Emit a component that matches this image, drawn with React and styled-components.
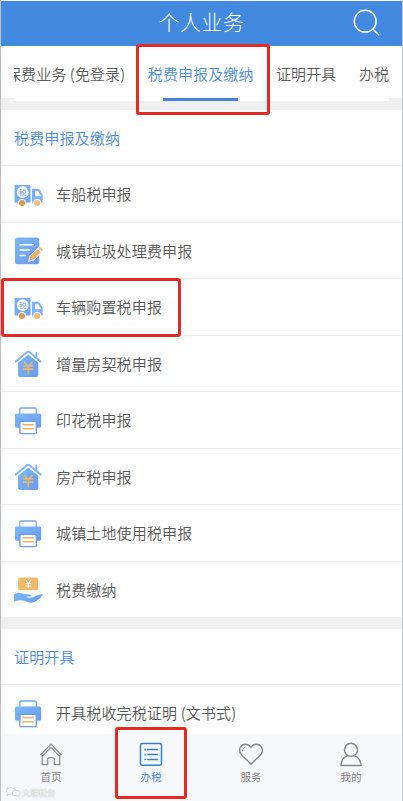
import styled, { createGlobalStyle, css } from "styled-components";

const font = `"Noto Sans CJK SC", "Noto Sans", sans-serif`;

const GlobalStyle = createGlobalStyle`
  * {
    box-sizing: border-box;
  }
  body {
    margin: 0;
    background: #fff;
    font-family: ${font};
    font-weight: 350;
    overflow: hidden;
  }
`;

// icons
const SearchIcon = () => (
  <svg width="30" height="30" viewBox="0 0 30 30" fill="none" stroke="#fff" strokeWidth="1.5">
    <circle cx="13.2" cy="13.2" r="10.9" />
    <path d="M20.8 21 L27.2 27.2" />
  </svg>
);

const Blue = () => (
  <defs>
    <linearGradient id="blue" x1="0" y1="0" x2="1" y2="1">
      <stop offset="0" stopColor="#7cb8f4" />
      <stop offset="1" stopColor="#6a9bec" />
    </linearGradient>
    <linearGradient id="blueLine" gradientUnits="userSpaceOnUse" x1="0" y1="0" x2="28" y2="28">
      <stop offset="0" stopColor="#7cb8f4" />
      <stop offset="1" stopColor="#6a9bec" />
    </linearGradient>
  </defs>
);

const TruckIcon = () => (
  <svg width="30" height="28" viewBox="0 0 30 28">
    <Blue />
    <rect x="0.5" y="4" width="16" height="17.5" rx="0.8" fill="url(#blueLine)" />
    <path d="M18 7.8 H23.8 Q25 7.8 25.7 8.8 L28.7 14 V20.5 Q28.7 21.5 27.7 21.5 H18 Z" fill="#7db3f2" />
    <path d="M21.2 10 H24 L27 15.2 H21.2 Z" fill="#fff" />
    <circle cx="8.7" cy="11.2" r="5.9" fill="#fff" />
    <text x="8.7" y="13.9" textAnchor="middle" fontSize="7.4" fontWeight="500" fontFamily={font} fill="#79a9ed">
      税
    </text>
    <circle cx="8" cy="22" r="4" fill="#fff" />
    <circle cx="23.2" cy="22" r="4" fill="#fff" />
    <circle cx="8" cy="22" r="3" fill="#d99954" />
    <circle cx="23.2" cy="22" r="3" fill="#efbd78" />
  </svg>
);

const FormIcon = () => (
  <svg width="30" height="28" viewBox="0 0 30 28">
    <Blue />
    <rect x="1" y="0.5" width="24.3" height="26.8" rx="2.5" fill="url(#blue)" />
    <path d="M6 7.7 H19.5 M6 13 H15.5 M6 18.6 H11.5" stroke="#fff" strokeWidth="1.5" strokeLinecap="round" />
    <path d="M14.5 24.5 L16 19 L25 10 L29 14 L20 23 Z" fill="#fff" stroke="#fff" strokeWidth="0.6" />
    <path d="M15 23.8 L16.4 19.3 L23.7 12 L26.9 15.2 L19.6 22.5 Z" fill="#edae62" />
    <path d="M24.5 11.4 L25.5 10.5 Q26.1 10 26.7 10.5 L28.3 12.1 Q28.8 12.7 28.3 13.3 L27.4 14.3 Z" fill="#f4c083" />
  </svg>
);

const HouseIcon = () => (
  <svg width="30" height="28" viewBox="0 0 30 28">
    <Blue />
    <path d="M14.2 4.4 L24.3 12.8 V24.8 Q24.3 27 22.1 27 H6.2 Q4 27 4 24.8 V12.8 Z" fill="url(#blue)" />
    <path
      d="M1.6 11.8 L13.2 2.1 Q14.2 1.3 15.2 2.1 L26.8 11.8"
      fill="none"
      stroke="#fff"
      strokeWidth="4"
    />
    <path
      d="M1.8 11.6 L13.2 2.1 Q14.2 1.3 15.2 2.1 L26.6 11.6 M22.4 7.6 V2.8"
      fill="none"
      stroke="#7db3f2"
      strokeWidth="1.9"
      strokeLinecap="round"
    />
    <path
      d="M10.4 12.5 L12.7 15 M18 12.5 L15.7 15 M9.6 15.8 H18.8 M9.6 19.2 H18.8 M14.2 15.8 V23.5"
      fill="none"
      stroke="#e6b376"
      strokeWidth="1.7"
      strokeLinecap="round"
    />
  </svg>
);

const PrinterIcon = () => (
  <svg width="30" height="28" viewBox="0 0 30 28">
    <Blue />
    <path d="M5.9 7 V2.2 Q5.9 1 7.1 1 H21 Q22.2 1 22.2 2.2 V7" fill="none" stroke="#70a9f0" strokeWidth="1.3" />
    <rect x="1" y="6.5" width="26.2" height="14.2" rx="1.8" fill="url(#blue)" />
    <rect x="5.9" y="14.2" width="16.4" height="12.4" rx="1.2" fill="#fff" stroke="#6a9fee" strokeWidth="1.4" />
    <path d="M8.5 17.7 H19.8 M8.5 21.8 H19.8" stroke="#eeb062" strokeWidth="1.5" />
  </svg>
);

const PayIcon = () => (
  <svg width="30" height="28" viewBox="0 0 30 28">
    <Blue />
    <rect x="4.2" y="1.6" width="19.8" height="12.6" rx="1.8" fill="#f0b96b" />
    <path
      d="M11.9 4.2 L14.3 7.8 L16.7 4.2 M11.7 7.8 H16.9 M11.7 10 H16.9 M14.3 7.8 V12"
      fill="none"
      stroke="#fff"
      strokeWidth="1.1"
    />
    <path
      d="M0 18.2 Q3.2 15.8 7.6 17.2 Q10.4 18.4 13.5 18.2 Q17.8 18 17.4 19.7 Q17 20.8 13 20.8 Q16.5 22 20.2 20.4 L24.7 18.8 Q29 17.5 28.8 18.8 Q27 22.2 22.3 25 Q18.5 27.4 14.5 26.3 Q9.3 23.8 5.5 24.2 L0 25.3 Z"
      fill="url(#blue)"
    />
    <path d="M12.5 21 Q17 22 20.2 20.4" fill="none" stroke="#fff" strokeWidth="0.8" />
  </svg>
);

const HomeIcon = () => (
  <svg width="26" height="26" viewBox="0 0 26 26" fill="none" stroke="#878787" strokeWidth="1.2">
    <path d="M2.4 14.2 L13 3 L23.6 14.2" />
    <path d="M4.2 15.7 L13 6.4 L21.8 15.7" />
    <path d="M4.2 14 V23.7 H9.7 V17.8 Q9.7 16.6 13 16.6 Q16.3 16.6 16.3 17.8 V23.7 H21.8 V14" />
  </svg>
);

const ListIcon = () => (
  <svg width="26" height="26" viewBox="0 0 26 26" fill="none" stroke="#397fd0" strokeWidth="1.5">
    <rect x="2.5" y="2.4" width="21" height="21.8" rx="1.6" />
    <path d="M9.2 8.5 H19.8 M9.2 13.5 H19.8 M9.2 18.5 H19.8 M6.3 8.5 H7.8 M6.3 13.5 H7.8 M6.3 18.5 H7.8" strokeWidth="1.3" />
  </svg>
);

const HeartIcon = () => (
  <svg width="26" height="26" viewBox="0 0 26 26" fill="none" stroke="#878787" strokeWidth="1.4">
    <path d="M13 23.1 L3.4 13.8 Q0.3 10 2.3 6.3 Q4.2 3.2 7.5 3.2 Q10.8 3.2 13 6 Q15.2 3.2 18.5 3.2 Q21.8 3.2 23.7 6.3 Q25.7 10 22.6 13.8 Z" />
    <path d="M4.6 10.2 Q4.3 6.7 7.6 6" strokeWidth="1" />
  </svg>
);

const UserIcon = () => (
  <svg width="26" height="26" viewBox="0 0 26 26" fill="none" stroke="#878787" strokeWidth="1.4">
    <circle cx="13" cy="8.8" r="6.5" />
    <path d="M9.6 14.8 Q3.4 16.8 3 24.5 H23 Q22.6 16.8 16.4 14.8" />
  </svg>
);

const taxItems = [
  { name: "车船税申报", icon: TruckIcon },
  { name: "城镇垃圾处理费申报", icon: FormIcon },
  { name: "车辆购置税申报", icon: TruckIcon, marked: true },
  { name: "增量房契税申报", icon: HouseIcon },
  { name: "印花税申报", icon: PrinterIcon },
  { name: "房产税申报", icon: HouseIcon },
  { name: "城镇土地使用税申报", icon: PrinterIcon },
  { name: "税费缴纳", icon: PayIcon },
];

const navItems = [
  { name: "首页", icon: HomeIcon },
  { name: "办税", icon: ListIcon, active: true },
  { name: "服务", icon: HeartIcon },
  { name: "我的", icon: UserIcon },
];

const App = () => {
  return (
    <Page>
      <GlobalStyle />
      <Header>
        <h1>个人业务</h1>
        <SearchButton aria-label="search">
          <SearchIcon />
        </SearchButton>
      </Header>
      <Tabs>
        <TabList>
          <Tab>保费业务 (免登录)</Tab>
          <Tab $active>税费申报及缴纳</Tab>
          <Tab>证明开具</Tab>
          <Tab>办税</Tab>
        </TabList>
        <Mark $top={-2} $left={136} $width={134} $height={71} />
      </Tabs>
      <Content>
        <Section>
          <SectionTitle>税费申报及缴纳</SectionTitle>
          {taxItems.map(({ name, icon: Icon, marked }) => (
            <Row key={name}>
              <Icon />
              <span>{name}</span>
              {marked && <Mark $top={-1} $left={1} $width={180} $height={59} />}
            </Row>
          ))}
        </Section>
        <Section>
          <SectionTitle>证明开具</SectionTitle>
          <Row>
            <PrinterIcon />
            <span>开具税收完税证明 (文书式)</span>
          </Row>
        </Section>
      </Content>
      <Nav>
        {navItems.map(({ name, icon: Icon, active }) => (
          <NavItem key={name} $active={active}>
            <Icon />
            <span>{name}</span>
            {active && <Mark $top={-7} $left={15} $width={72} $height={72} />}
          </NavItem>
        ))}
        <Watermark>
          <svg width="15" height="11" viewBox="0 0 15 11" fill="#fff" stroke="#c4c4c4" strokeWidth="0.7">
            <path d="M1 1.5 Q5 -0.2 9 1.5 Q11 5 7 7.2 L3 7 L1.5 9 L1.6 6.3 Q-0.2 4 1 1.5 Z" />
            <path d="M7 4 Q10 2.2 13.3 4 Q15.2 6.6 13 8 L12.8 9.6 L11.2 8.7 Q7.5 9.3 6.6 7 Q6 5.2 7 4 Z" />
          </svg>
          <span>大理税务</span>
        </Watermark>
      </Nav>
    </Page>
  );
};

const Page = styled.div`
  position: relative;
  display: flex;
  flex-direction: column;
  width: 403px;
  height: 801px;
  padding-top: 1px;
  border-left: 1px solid #bcbec1;
  border-right: 1px solid #c3cbd4;
  overflow: hidden;
`;

const Header = styled.header`
  display: grid;
  grid-template-columns: 1fr auto 1fr;
  align-items: center;
  flex: none;
  height: 45px;
  background: #418ae0;
  color: #fff;
  h1 {
    grid-column: 2;
    margin: 0;
    padding-bottom: 4px;
    font-size: 21px;
    font-weight: 300;
    letter-spacing: 0.5px;
    line-height: 41px;
  }
`;

const SearchButton = styled.button`
  justify-self: end;
  display: flex;
  margin: 0 20px 1px 0;
  padding: 0;
  border: 0;
  background: none;
`;

const Tabs = styled.nav`
  position: relative;
  flex: none;
  height: 64px;
  padding: 0 13px;
  background: linear-gradient(#fff 52px, #f0f0f0 52px);
`;

/* scrolled a little, so the first tab is cut by the left edge */
const TabList = styled.div`
  display: flex;
  gap: 22.5px;
  height: 55px;
  background: #fff;
  overflow: hidden;
  > :first-child {
    margin-left: -8px;
  }
`;

const Tab = styled.div`
  flex: none;
  height: 55px;
  font-size: 15px;
  line-height: 55px;
  letter-spacing: 0.1px;
  white-space: nowrap;
  color: #5c5c5c;
  ${({ $active }) =>
    $active &&
    css`
      display: flex;
      flex-direction: column;
      align-items: center;
      color: #4a8cdd;
      &::after {
        content: "";
        width: 75px;
        height: 3px;
        margin-top: -3px;
        background: #3f86dc;
      }
    `}
`;

const Content = styled.main`
  flex: 1;
  min-height: 0;
  overflow: hidden;
`;

const Section = styled.section`
  background: #fff;
  & + & {
    border-top: 12px solid #f0f0f0;
  }
`;

const SectionTitle = styled.h2`
  margin: 0;
  height: 56px;
  padding-left: 13px;
  border-bottom: 1px solid #ededed;
  color: #4a8cdd;
  font-size: 15px;
  font-weight: 350;
  letter-spacing: 0.15px;
  line-height: 56px;
`;

const Row = styled.div`
  position: relative;
  display: flex;
  align-items: center;
  gap: 12px;
  height: 56.5px;
  padding-left: 13px;
  border-bottom: 1px solid #eee;
  font-size: 15px;
  letter-spacing: 0.15px;
  color: #585858;
  &:last-child {
    border-bottom: 0;
    height: 55.5px;
  }
  svg {
    margin-top: 2px;
  }
`;

const Nav = styled.footer`
  position: relative;
  display: flex;
  flex: none;
  height: 67px;
  background: #f7f8f9;
`;

const NavItem = styled.div`
  position: relative;
  display: flex;
  flex-direction: column;
  align-items: center;
  width: 100px;
  padding-top: 7px;
  font-size: 10.5px;
  line-height: 20px;
  color: ${({ $active }) => ($active ? "#397fd0" : "#777")};
`;

// red frame drawn over the highlighted control
const Mark = styled.div`
  position: absolute;
  z-index: 2;
  top: ${({ $top }) => $top}px;
  left: ${({ $left }) => $left - 1}px;
  width: ${({ $width }) => $width}px;
  height: ${({ $height }) => $height}px;
  border: 3px solid #e42a22;
  border-radius: 3px;
  pointer-events: none;
`;

const Watermark = styled.div`
  position: absolute;
  left: 5px;
  bottom: 3px;
  display: flex;
  align-items: center;
  gap: 1px;
  font-size: 8.3px;
  line-height: 12px;
  color: #fff;
  text-shadow: 0 0 1px #aaa, 0 0 1px #bbb;
`;

export default App;
